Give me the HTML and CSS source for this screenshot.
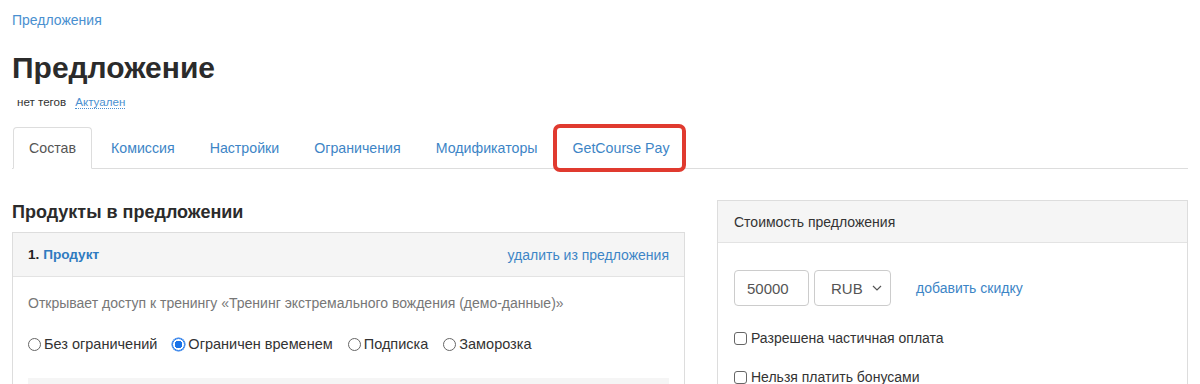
FILE: index.html
```html
<!DOCTYPE html>
<html lang="ru">
<head>
<meta charset="utf-8">
<title>Предложение</title>
<link rel="stylesheet" href="styles.css">
</head>
<body>
<div class="page">
  <div class="breadcrumb"><a href="#">Предложения</a></div>
  <h1 class="title">Предложение</h1>
  <div class="tags"><span class="no-tags">нет тегов</span><a class="status" href="#">Актуален</a></div>

  <ul class="tabs">
    <li class="tab active"><a href="#">Состав</a></li>
    <li class="tab"><a href="#">Комиссия</a></li>
    <li class="tab"><a href="#">Настройки</a></li>
    <li class="tab"><a href="#">Ограничения</a></li>
    <li class="tab"><a href="#">Модификаторы</a></li>
    <li class="tab highlighted"><a href="#">GetCourse Pay</a></li>
  </ul>

  <div class="row">
    <div class="col-main">
      <h3 class="section-title">Продукты в предложении</h3>
      <div class="panel">
        <div class="panel-heading split">
          <span class="product-name">1. <a href="#">Продукт</a></span>
          <a class="remove" href="#">удалить из предложения</a>
        </div>
        <div class="panel-body">
          <p class="desc">Открывает доступ к тренингу «Тренинг экстремального вождения (демо-данные)»</p>
          <div class="radios">
            <label class="radio"><span class="radio-dot"></span>Без ограничений</label>
            <label class="radio"><span class="radio-dot checked"></span>Ограничен временем</label>
            <label class="radio"><span class="radio-dot"></span>Подписка</label>
            <label class="radio"><span class="radio-dot"></span>Заморозка</label>
          </div>
          <div class="gray-block"></div>
        </div>
      </div>
    </div>

    <div class="col-side">
      <div class="panel">
        <div class="panel-heading">Стоимость предложения</div>
        <div class="panel-body price-body">
          <div class="price-row">
            <div class="input price">50000</div>
            <div class="input currency">RUB
              <svg class="chevron" width="10" height="6" viewBox="0 0 10 6"><path d="M1 1 L5 5 L9 1" fill="none" stroke="#555" stroke-width="1.2"/></svg>
            </div>
            <a class="discount" href="#">добавить скидку</a>
          </div>
          <label class="check first"><span class="box"></span>Разрешена частичная оплата</label>
          <label class="check"><span class="box"></span>Нельзя платить бонусами</label>
        </div>
      </div>
    </div>
  </div>
</div>
</body>
</html>
```

FILE: styles.css
```css
* { box-sizing: border-box; }
html, body { margin: 0; padding: 0; background: #fff; }
body {
  font-family: "Liberation Sans", Arial, sans-serif;
  font-size: 14px;
  color: #333;
  overflow: hidden;
}
a { color: #3d85c6; text-decoration: none; }

.page { padding: 0 12px; }

.breadcrumb { margin-top: 10px; line-height: 20px; font-size: 14px; }
.breadcrumb a { color: #4a90d0; }

.title {
  margin: 20px 0 0;
  font-size: 30px;
  line-height: 36px;
  font-weight: bold;
  color: #2b2b2b;
}

.tags { margin-top: 7px; line-height: 18px; font-size: 11.6px; padding-left: 5px; }
.no-tags { color: #333; margin-right: 9px; }
.status { color: #4a90d0; border-bottom: 1px dotted #4a90d0; }

.tabs {
  list-style: none;
  margin: 16px 0 0;
  padding: 0 0 0 1px;
  display: flex;
  border-bottom: 1px solid #ddd;
  font-size: 14.2px;
}
.tab { margin-right: 3px; margin-bottom: -1px; position: relative; }
.tab a {
  display: block;
  padding: 10px 15px;
  line-height: 20px;
  border: 1px solid transparent;
  border-radius: 4px 4px 0 0;
  color: #3d85c6;
}
.tab.active a {
  color: #555;
  background: #fff;
  border-color: #ddd #ddd transparent;
}
.tab.highlighted::after {
  content: "";
  position: absolute;
  left: -3px; right: -1px; top: -3px; bottom: -3px;
  border: 4px solid #e03a2f;
  border-radius: 7px;
}

.row {
  display: grid;
  grid-template-columns: 673px 471px;
  column-gap: 32px;
  margin-top: 31px;
  align-items: start;
}

.section-title {
  margin: 0 0 9px;
  padding-top: 1px;
  font-size: 18px;
  line-height: 22px;
  font-weight: bold;
  color: #2b2b2b;
}

.panel { border: 1px solid #ddd; border-bottom: 0; background: #fff; }
.panel-heading {
  background: #f5f5f5;
  border-bottom: 1px solid #e3e3e3;
  padding: 11px 15px 10px;
  line-height: 22px;
  color: #333;
}
.col-side .panel-heading { padding: 11px 16px 10px; line-height: 20px; }
.split { display: flex; justify-content: space-between; }
.product-name { font-size: 13.6px; font-weight: bold; color: #222; }
.product-name a { color: #2f7bc0; }
.remove { color: #3d85c6; }

.panel-body { padding: 16px 15px 0; }
.desc { margin: 0; line-height: 20px; color: #777; }

.radios { display: flex; gap: 15px; margin-top: 21px; line-height: 20px; font-size: 14.5px; }
.radio { display: flex; align-items: center; color: #333; }
.radio-dot {
  width: 13px; height: 13px;
  border: 1px solid #666;
  border-radius: 50%;
  margin-right: 3px;
  background: #fff;
}
.radio-dot.checked {
  border: 1px solid #1a73e8;
  background: radial-gradient(circle, #1a73e8 0 3.6px, #fff 4px);
  box-shadow: 0 0 0 0.5px #1a73e8;
}

.gray-block { margin-top: 24px; height: 40px; background: #f5f5f5; }

.price-body { padding: 27px 16px 0; }
.price-row { display: flex; align-items: center; }
.input {
  height: 36px;
  border: 1px solid #ccc;
  border-radius: 4px;
  display: flex;
  align-items: center;
  color: #555;
  font-size: 15px;
}
.price { width: 75px; padding-left: 12px; }
.currency { width: 77px; margin-left: 5px; padding-left: 16px; justify-content: space-between; padding-right: 8px; }
.discount { margin-left: 25px; color: #3d85c6; }

.check { display: flex; align-items: center; line-height: 20px; margin-top: 19px; color: #333; }
.check.first { margin-top: 22px; }
.box {
  width: 13px; height: 13px;
  border: 1px solid #666;
  border-radius: 3px;
  margin-right: 4px;
  background: #fff;
}
```
